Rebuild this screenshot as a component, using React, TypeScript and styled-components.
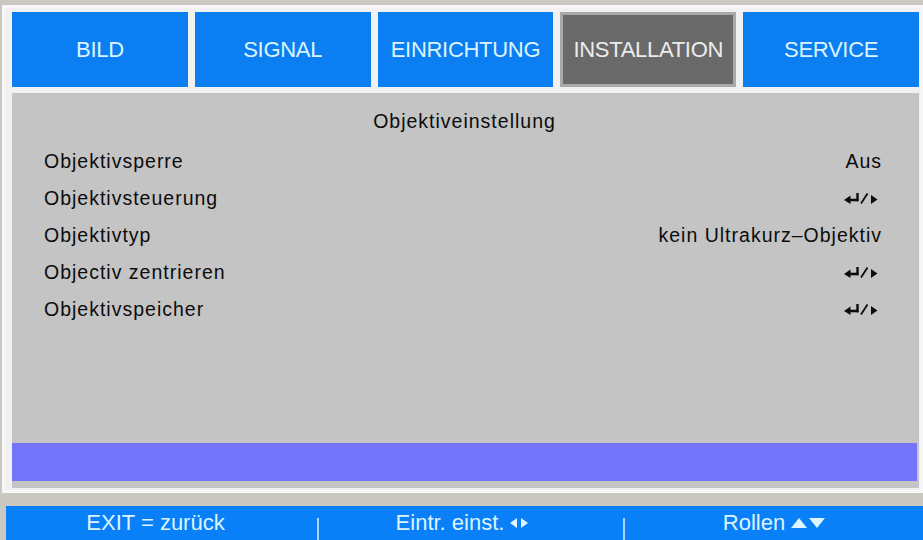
import styled, { createGlobalStyle } from "styled-components";

const GlobalStyle = createGlobalStyle`
  html, body {
    margin: 0;
    padding: 0;
    background: #cbc7c2;
    overflow: hidden;
  }
  body {
    font-family: "Liberation Sans", Arial, sans-serif;
  }
`;

const tabs = ["BILD", "SIGNAL", "EINRICHTUNG", "INSTALLATION", "SERVICE"];
const activeTab = "INSTALLATION";

type Value = { text?: string; icon?: boolean };

const rows: { label: string; value: Value }[] = [
  { label: "Objektivsperre", value: { text: "Aus" } },
  { label: "Objektivsteuerung", value: { icon: true } },
  { label: "Objektivtyp", value: { text: "kein Ultrakurz–Objektiv" } },
  { label: "Objectiv zentrieren", value: { icon: true } },
  { label: "Objektivspeicher", value: { icon: true } },
];

const Page = styled.div`
  width: 923px;
  height: 540px;
  padding-top: 5px;
  box-sizing: border-box;
  display: flex;
  flex-direction: column;
  overflow: hidden;
`;

const Frame = styled.div`
  flex-shrink: 0;
  margin-left: 2px;
  height: 488px;
  box-sizing: border-box;
  border: 3px solid #f7f7f7;
  background: #f1f1f1;
  padding: 4px 1px 2px 7px;
  display: flex;
  flex-direction: column;
  gap: 6px;
`;

const TabBar = styled.div`
  display: grid;
  grid-template-columns: repeat(5, 1fr);
  gap: 7px;
  height: 75px;
`;

const Tab = styled.div<{ $active?: boolean }>`
  display: flex;
  align-items: center;
  justify-content: center;
  box-sizing: border-box;
  font-size: 22px;
  letter-spacing: -0.3px;
  background: ${({ $active }) => ($active ? "#696969" : "#0b7ff2")};
  color: ${({ $active }) => ($active ? "#ececec" : "#dcf4ff")};
  border: ${({ $active }) => ($active ? "3px solid #a9a9a9" : "none")};
`;

const Content = styled.div`
  flex: 1;
  background: #c4c4c4;
  display: flex;
  flex-direction: column;
`;

const Section = styled.div`
  padding: 10px 37px 0 32px;
  color: #0c0c0c;
  font-size: 19.5px;
  letter-spacing: 1px;
`;

const Title = styled.div`
  text-align: center;
  line-height: 37px;
  margin-bottom: 3px;
  padding-left: 3px;
`;

const Row = styled.div`
  display: flex;
  justify-content: space-between;
  align-items: center;
  height: 37px;
  line-height: 37px;
`;

const Highlight = styled.div`
  margin: auto 2px 7px 0;
  height: 38px;
  background: #7474fb;
`;

const Footer = styled.div`
  flex-shrink: 0;
  margin-top: 13px;
  margin-left: 6px;
  height: 40px;
  background: #0980f7;
  color: #dcf4ff;
  font-size: 22px;
  display: grid;
  grid-template-columns: 311px 2px 304px 2px 1fr;
  align-items: start;
`;

const FooterItem = styled.div<{ $shift?: number }>`
  line-height: 34px;
  display: flex;
  justify-content: center;
  align-items: center;
  gap: 6px;
  padding-right: ${({ $shift = 0 }) => $shift}px;
`;

const Divider = styled.div`
  margin-top: 12px;
  height: 28px;
  background: #a9d6ff;
`;

const EnterIcon = () => (
  <svg width="36" height="11" viewBox="0 0 36 11" style={{ marginRight: 2 }}>
    <polygon points="0,7 6.5,2.5 6.5,11" fill="#0c0c0c" />
    <line x1="5" y1="7" x2="14.5" y2="7" stroke="#0c0c0c" strokeWidth="2.6" />
    <line x1="13.5" y1="0" x2="13.5" y2="8.2" stroke="#0c0c0c" strokeWidth="2.4" />
    <line x1="17" y1="10.5" x2="23.5" y2="0.5" stroke="#0c0c0c" strokeWidth="1.8" />
    <polygon points="27,2 33.5,6.5 27,11" fill="#0c0c0c" />
  </svg>
);

const LeftRight = () => (
  <svg width="18" height="12" viewBox="0 0 18 12">
    <polygon points="0,6 7,1 7,11" fill="#dcf4ff" />
    <polygon points="18,6 11,1 11,11" fill="#dcf4ff" />
  </svg>
);

const UpDown = () => (
  <svg width="34" height="12" viewBox="0 0 34 12">
    <polygon points="8,1 16,11 0,11" fill="#dcf4ff" />
    <polygon points="18,1 34,1 26,11" fill="#dcf4ff" />
  </svg>
);

export default function App() {
  return (
    <>
      <GlobalStyle />
      <Page>
        <Frame>
          <TabBar>
            {tabs.map((t) => (
              <Tab key={t} $active={t === activeTab}>
                {t}
              </Tab>
            ))}
          </TabBar>
          <Content>
            <Section>
              <Title>Objektiveinstellung</Title>
              {rows.map((r) => (
                <Row key={r.label}>
                  <span>{r.label}</span>
                  {r.value.icon ? <EnterIcon /> : <span>{r.value.text}</span>}
                </Row>
              ))}
            </Section>
            <Highlight />
          </Content>
        </Frame>
        <Footer>
          <FooterItem $shift={12}>EXIT = zurück</FooterItem>
          <Divider />
          <FooterItem $shift={18}>
            <span>Eintr. einst.</span>
            <LeftRight />
          </FooterItem>
          <Divider />
          <FooterItem>
            <span>Rollen</span>
            <UpDown />
          </FooterItem>
        </Footer>
      </Page>
    </>
  );
}
